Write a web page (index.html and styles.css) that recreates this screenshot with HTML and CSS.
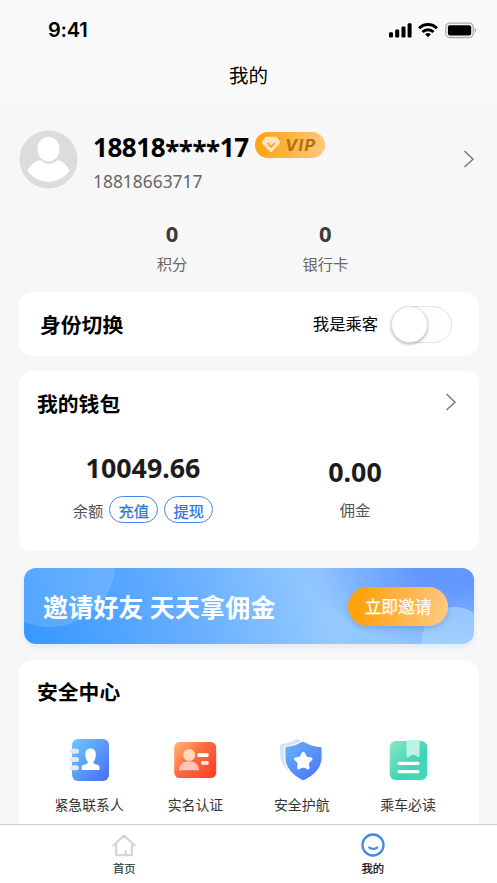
FILE: index.html
```html
<!DOCTYPE html>
<html lang="zh-CN">
<head>
<meta charset="utf-8">
<meta name="viewport" content="width=device-width, initial-scale=1">
<title>我的</title>
<link rel="stylesheet" href="styles.css">
</head>
<body>
<div class="app">
  <header class="header">
    <div class="status">
      <span class="status-time">9:41</span>
      <svg class="status-icons" width="90" height="18" viewBox="0 0 90 18">
        <rect x="1" y="11.2" width="4" height="5.3" rx="1.2"/>
        <rect x="7.2" y="8.6" width="4" height="7.9" rx="1.2"/>
        <rect x="13.5" y="5.6" width="4" height="10.9" rx="1.2"/>
        <rect x="19.6" y="2.2" width="4" height="14.3" rx="1.2"/>
        <g fill="none" stroke="#000" stroke-width="2.9">
          <path d="M31.1 7.3a12.2 12.2 0 0 1 17.8 0"/>
          <path d="M34.5 11a7.7 7.7 0 0 1 11 0"/>
        </g>
        <path d="M40 16.3l-2.9-3a4.2 4.2 0 0 1 5.8 0z"/>
        <rect x="57.8" y="2.1" width="27.4" height="14.4" rx="4" fill="none" stroke="#aaa" stroke-width="1.3"/>
        <rect x="59.9" y="4.2" width="23.3" height="10.2" rx="2"/>
        <path d="M86.7 7v4.8c2-.9 2-3.9 0-4.8z" fill="#aaa"/>
      </svg>
    </div>
    <h1 class="page-title">我的</h1>
  </header>

  <main class="content">
    <section class="profile">
      <svg class="avatar" viewBox="0 0 60 60">
        <circle cx="30" cy="30" r="29.5" fill="#dcdcdc"/>
        <ellipse cx="30" cy="19.3" rx="11.3" ry="12.5" fill="#fff"/>
        <path d="M8.5 41.5C11.5 35.5 16 32 21.5 30.5C26 35.5 35 35.5 39.5 30.5C45 32 48.5 35.5 51.5 41.5C46 49 38.5 52.5 30 52.5S14 49 8.5 41.5z" fill="#fff"/>
      </svg>
      <div class="identity">
        <div class="name-row">
          <strong class="name">18818<span class="mask">****</span>17</strong>
          <span class="vip">
            <svg width="20" height="17" viewBox="0 0 20 17"><path d="M4.5.7h11l3.4 4.8c.4.7.3 1.3-.2 1.9l-7.5 8.2c-.8.8-1.7.8-2.5 0L1.300 7.400C.8 6.800.7 6.200 1.100 5.500z" fill="#ffe3bd"/><path d="M6.700 7.400l3.300 3.500 3.400-3.500" fill="none" stroke="#f5a532" stroke-width="1.700" stroke-linecap="round" stroke-linejoin="round"/></svg>
            <span class="vip-text">VIP</span>
          </span>
        </div>
        <div class="phone">18818663717</div>
      </div>
      <svg class="chevron" width="12" height="18" viewBox="0 0 12 18"><path d="M1.5 1L10 9.200 1.500 17"/></svg>
    </section>

    <section class="stats">
      <div class="stat"><b>0</b><span>积分</span></div>
      <div class="stat"><b>0</b><span>银行卡</span></div>
    </section>

    <section class="card role">
      <h2>身份切换</h2>
      <span class="role-label">我是乘客</span>
      <span class="switch"><i></i></span>
    </section>

    <section class="card wallet">
      <div class="wallet-head">
        <h2>我的钱包</h2>
        <svg class="chevron" width="12" height="18" viewBox="0 0 12 18"><path d="M1.5 1L10 9.200 1.500 17"/></svg>
      </div>
      <div class="wallet-body">
        <div class="balance">
          <b>10049.66</b>
          <div class="balance-row"><span>余额</span><a class="pill">充值</a><a class="pill">提现</a></div>
        </div>
        <div class="commission">
          <b>0.00</b>
          <span>佣金</span>
        </div>
      </div>
    </section>

    <section class="banner">
      <span class="banner-text">邀请好友 天天拿佣金</span>
      <a class="banner-btn">立即邀请</a>
    </section>

    <section class="card safety">
      <h2>安全中心</h2>
      <div class="grid">
        <div class="item">
          <svg width="44" height="44" viewBox="0 0 44 44">
            <defs><linearGradient id="book" x1="0" y1="0" x2="1" y2="1"><stop offset="0" stop-color="#6cc8fc"/><stop offset="1" stop-color="#486cf8"/></linearGradient></defs>
            <rect x="5" y="1" width="37" height="42" rx="6" fill="url(#book)"/>
            <g fill="#dce9ff"><rect x="2.500" y="10.800" width="9.500" height="5" rx="2.500"/><rect x="2.500" y="19" width="9.500" height="5" rx="2.500"/><rect x="2.500" y="27.200" width="9.500" height="5" rx="2.500"/></g>
            <path d="M23.500 10.500c3.500 0 5.300 2.500 5.300 6 0 3-1 5.500-2.300 7.300-.2 1.500.4 2.100 2 2.400 3.200.5 4.200 1.500 4.200 4.500 0 .9-.5 1.300-1.500 1.300H16c-1 0-1.500-.4-1.500-1.300 0-3 1-4 4.200-4.500 1.600-.3 2.200-.9 2-2.400-1.400-1.800-2.400-4.300-2.400-7.300 0-3.500 1.700-6 5.200-6z" fill="#fff"/>
          </svg>
          <span>紧急联系人</span>
        </div>
        <div class="item">
          <svg width="44" height="44" viewBox="0 0 44 44">
            <defs><linearGradient id="idc" x1="0" y1="0" x2="1" y2=".8"><stop offset="0" stop-color="#ffb873"/><stop offset=".5" stop-color="#ff6a41"/><stop offset="1" stop-color="#fb4227"/></linearGradient></defs>
            <rect x="1.200" y="4" width="42" height="36" rx="5.500" fill="url(#idc)"/>
            <path d="M6 32.300c0-5 3.500-9 10-9s10 4 10 9z" fill="#ffc5bd"/>
            <circle cx="16.200" cy="17" r="6" fill="#ffd9bd"/>
            <rect x="24.300" y="15.300" width="11.300" height="3.700" rx="1.200" fill="#fff"/>
            <rect x="28" y="23" width="7.600" height="3.700" rx="1.200" fill="#ffe9e4"/>
          </svg>
          <span>实名认证</span>
        </div>
        <div class="item">
          <svg width="44" height="44" viewBox="0 0 44 44">
            <defs><linearGradient id="shd" x1="0" y1="0" x2=".8" y2="1"><stop offset="0" stop-color="#68b5f8"/><stop offset="1" stop-color="#4b76fb"/></linearGradient></defs>
            <path d="M1 8c0-1.400.7-2 2-2.100C8 5.400 13 3.900 16.500 1.400c1-.7 2.200-.7 3.200 0l3 2L11 34C5 29 1 23 1 16z" fill="#d8e0fc"/>
            <path d="M5.800 8.500c5.200-.3 11.200-1.800 15.800-4.700 1.800-1 2.700-1 4.400 0 4.600 2.900 10 4.200 15.200 4.700 1.400.1 2 .8 2 2.200v8.800c0 9.500-7 17.500-16.800 22.500-1.600.8-2.600.8-4.200 0C12.800 37 5.800 29 5.800 19.500z" fill="url(#shd)" stroke="#fff" stroke-width="1.200"/>
            <path d="M24.300 15.300l2.500 4.700 5.200.9-3.700 3.800.7 5.200-4.700-2.300-4.700 2.300.7-5.200-3.700-3.800 5.200-.9z" fill="#fff" stroke="#fff" stroke-width="3" stroke-linejoin="round"/>
          </svg>
          <span>安全护航</span>
        </div>
        <div class="item">
          <svg width="44" height="44" viewBox="0 0 44 44">
            <defs><linearGradient id="rd" x1="0" y1="0" x2="1" y2="1"><stop offset="0" stop-color="#88e8c8"/><stop offset=".6" stop-color="#40d4b7"/><stop offset="1" stop-color="#42dabc"/></linearGradient></defs>
            <rect x="3.700" y="3" width="37.500" height="39" rx="6" fill="url(#rd)"/>
            <path d="M20.500 2h13v16.300c0 1-.8 1.300-1.500.7L28.400 17c-.7-.8-1.700-.8-2.400 0l-3.300 2c-1 .6-2.200.3-2.200-.8z" fill="#bdf2e4"/>
            <g fill="#fff"><rect x="11.500" y="23.700" width="22" height="3.300" rx="1.300"/><rect x="11.500" y="32" width="22" height="3.300" rx="1.300"/></g>
          </svg>
          <span>乘车必读</span>
        </div>
      </div>
    </section>
  </main>

  <nav class="tabbar">
    <a class="tab tab-home">
      <svg width="26" height="26" viewBox="0 0 26 26" fill="none" stroke="#d5d5d5" stroke-width="2.200" stroke-linecap="round" stroke-linejoin="round"><path d="M2.300 13.500L13 3.600l10.700 9.900M5.200 12v11.200h15.700V12M14.700 19v4"/></svg>
      <span>首页</span>
    </a>
    <a class="tab">
      <svg width="26" height="26" viewBox="0 0 26 26" fill="none" stroke="#4686e5" stroke-width="2.300" stroke-linecap="round"><circle cx="13" cy="13" r="10.500"/><path d="M9.300 15.500c2 1.900 6 1.900 8 0"/></svg>
      <span>我的</span>
    </a>
  </nav>
</div>
</body>
</html>
```
FILE: styles.css
```css
* { box-sizing: border-box; }
body {
  margin: 0;
  background: #f7f7f7;
  font-family: "Noto Sans", "Noto Sans CJK SC", sans-serif;
  color: #000;
}
h1, h2 { margin: 0; }
.app {
  height: 883px;
  display: flex;
  flex-direction: column;
  overflow: hidden;
}
.header { height: 103px; background: #f9f9f9; flex: none; }
.status {
  height: 60px;
  padding: 0 19px 0 48px;
  display: flex;
  align-items: center;
  justify-content: space-between;
}
.status-time { font: 600 20px/24px Inter, sans-serif; letter-spacing: -.2px; }
.page-title {
  font: 400 19.5px/30px "Noto Sans CJK SC", sans-serif;
  text-align: center;
}
.content { flex: 1; min-height: 0; overflow: hidden; padding: 0 18px 0 19px; }
.profile { height: 113px; display: flex; align-items: center; }
.avatar { width: 59px; height: 59px; flex: none; }
.identity { margin-left: 15px; padding-top: 3px; flex: 1; }
.name-row { display: flex; align-items: center; height: 40px; gap: 8px; }
.name { font-size: 26px; line-height: 40px; width: 154px; letter-spacing: -.45px; white-space: nowrap; }
.mask { position: relative; top: 4px; }
.vip {
  width: 70px;
  height: 26px;
  margin-top: -5px;
  padding-left: 6px;
  border-radius: 13px;
  background: linear-gradient(100deg, #ffa412 10%, #ffc981);
  display: flex;
  align-items: center;
  gap: 4px;
}
.vip-text { font: italic 700 16.5px/24px Inter, sans-serif; color: #b36f0f; letter-spacing: 1.3px; }
.phone { font-size: 17.4px; line-height: 28px; color: #666; }
.chevron { fill: none; stroke: #777; stroke-width: 1.4; flex: none; }
.profile .chevron { margin: -2px 4px 0 0; }
.stats {
  height: 76px;
  padding: 2px 77px 0 76.5px;
  display: grid;
  grid-template-columns: 1fr 1fr;
  text-align: center;
}
.stat b { display: block; font-size: 22px; line-height: 30px; color: #3c3c3c; }
.stat span { display: block; font-size: 15.3px; line-height: 33px; color: #666; }
.card { background: #fff; border-radius: 14px; }
.card h2 { font: 700 20.8px/32px "Noto Sans CJK SC", sans-serif; }
.role {
  height: 64px;
  padding: 0 27px 0 21px;
  display: flex;
  align-items: center;
}
.role-label { margin-left: auto; margin-right: 13px; font-size: 16.3px; line-height: 24px; }
.switch {
  width: 61px;
  height: 37px;
  border: 1px solid #e2e2e2;
  border-radius: 19px;
  background: #fdfdfd;
}
.switch i {
  display: block;
  width: 37px;
  height: 37px;
  margin: -1px;
  border-radius: 50%;
  background: #fff;
  border: 1px solid #ddd;
  box-shadow: 0 1.5px 3px rgba(0, 0, 0, .28);
}
.wallet { height: 180px; margin-top: 15px; padding: 16px 22px 0 18px; }
.wallet-head { height: 32px; display: flex; align-items: center; justify-content: space-between; }
.wallet-head .chevron { margin-top: -2px; }
.wallet-body { display: grid; grid-template-columns: 212px 212px; text-align: center; }
.wallet-body b { display: block; font-size: 26.800px; line-height: 40px; color: #1c1c1c; }
.wallet-body span { font-size: 15.3px; color: #555; }
.balance { padding-top: 29px; }
.balance-row { height: 27px; margin-top: 8px; display: flex; justify-content: center; align-items: center; gap: 6px; }
.pill {
  width: 49px;
  height: 27px;
  border: 1px solid #4686e5;
  border-radius: 14px;
  color: #2f76d8;
  -webkit-text-stroke: .25px #2f76d8;
  font: 400 15.3px/26px "Noto Sans CJK SC", sans-serif;
}
.commission { padding-top: 33px; }
.commission span { display: block; line-height: 28px; margin-top: 4px; }
.banner {
  height: 76px;
  margin: 17px 5px 0;
  padding: 0 26px 0 19px;
  border-radius: 12px;
  display: flex;
  align-items: center;
  justify-content: space-between;
  background:
    radial-gradient(circle at 25px -8px, rgba(255, 255, 255, .14) 66.5px, transparent 67.5px),
    radial-gradient(circle at 431px 72px, rgba(180, 221, 255, .55) 32.5px, transparent 33.5px),
    radial-gradient(ellipse 150px 80px at 430px 0, #6398ff 25%, rgba(99, 152, 255, 0)),
    linear-gradient(78deg, #3799ff 2%, #65adff 35%, #95caff 67%, #8bc0ff);
  box-shadow: 0 3px 6px rgba(90, 160, 255, .15);
}
.banner-text { color: #fff; font: 700 25px/34px "Noto Sans CJK SC", sans-serif; letter-spacing: .2px; margin-top: -1px; }
.banner-btn {
  width: 100px;
  height: 39px;
  border-radius: 20px;
  background: linear-gradient(100deg, #ffa20c 12%, #ffca86);
  box-shadow: 0 3px 5px rgba(85, 120, 170, .3);
  color: #fff;
  text-align: center;
  -webkit-text-stroke: .25px #fff;
  font: 400 16.7px/38px "Noto Sans CJK SC", sans-serif;
}
.safety { height: 190px; margin-top: 16px; padding: 15px 0 0; }
.safety h2 { padding-left: 18px; }
.grid { display: grid; grid-template-columns: repeat(4, 106.3px); margin: 31px 0 0 17px; }
.item { display: flex; flex-direction: column; align-items: center; }
.item svg { margin-left: -1px; }
.item span { margin-top: 11px; font-size: 13.9px; line-height: 24px; color: #333; }
.tabbar {
  height: 59px;
  flex: none;
  border-top: 1.5px solid #ccc;
  background: #fff;
  display: grid;
  grid-template-columns: 1fr 1fr;
}
.tab { display: flex; flex-direction: column; align-items: center; padding-top: 7px; }
.tab span {
  font: 400 11.3px/20px "Noto Sans CJK SC", sans-serif;
  -webkit-text-stroke: .2px;
}
.tab-home span { color: #244240; }
```
